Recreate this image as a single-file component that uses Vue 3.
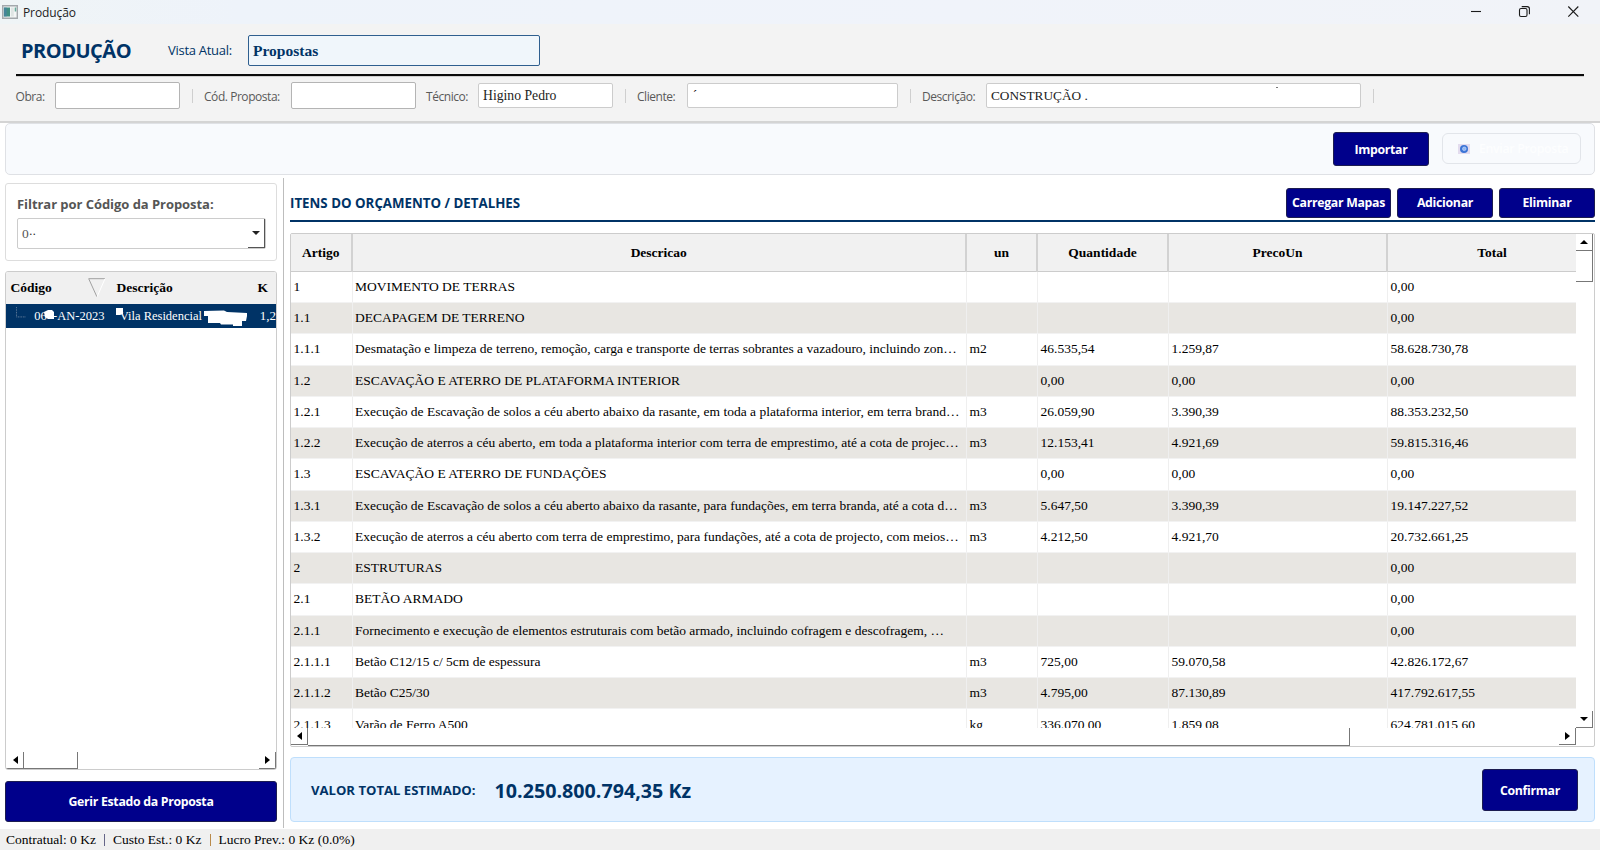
<script setup>
const columns = [
  { key: 'art', label: 'Artigo' },
  { key: 'desc', label: 'Descricao' },
  { key: 'un', label: 'un' },
  { key: 'qt', label: 'Quantidade' },
  { key: 'pu', label: 'PrecoUn' },
  { key: 'tot', label: 'Total' },
]

const rows = [
  { art: '1', desc: 'MOVIMENTO DE TERRAS', tot: '0,00' },
  { art: '1.1', desc: 'DECAPAGEM DE TERRENO', tot: '0,00' },
  { art: '1.1.1', desc: 'Desmatação e limpeza de terreno, remoção, carga e transporte de terras sobrantes a vazadouro, incluindo zon…', un: 'm2', qt: '46.535,54', pu: '1.259,87', tot: '58.628.730,78' },
  { art: '1.2', desc: 'ESCAVAÇÃO E ATERRO DE PLATAFORMA INTERIOR', qt: '0,00', pu: '0,00', tot: '0,00' },
  { art: '1.2.1', desc: 'Execução de Escavação de solos a céu aberto abaixo da rasante, em toda a plataforma interior, em terra brand…', un: 'm3', qt: '26.059,90', pu: '3.390,39', tot: '88.353.232,50' },
  { art: '1.2.2', desc: 'Execução de aterros a céu aberto, em toda a plataforma interior com terra de emprestimo, até a cota de projec…', un: 'm3', qt: '12.153,41', pu: '4.921,69', tot: '59.815.316,46' },
  { art: '1.3', desc: 'ESCAVAÇÃO E ATERRO DE FUNDAÇÕES', qt: '0,00', pu: '0,00', tot: '0,00' },
  { art: '1.3.1', desc: 'Execução de Escavação de solos a céu aberto abaixo da rasante, para fundações, em terra branda, até a cota d…', un: 'm3', qt: '5.647,50', pu: '3.390,39', tot: '19.147.227,52' },
  { art: '1.3.2', desc: 'Execução de aterros a céu aberto com terra de emprestimo, para fundações, até a cota de projecto, com meios…', un: 'm3', qt: '4.212,50', pu: '4.921,70', tot: '20.732.661,25' },
  { art: '2', desc: 'ESTRUTURAS', tot: '0,00' },
  { art: '2.1', desc: 'BETÃO ARMADO', tot: '0,00' },
  { art: '2.1.1', desc: 'Fornecimento e execução de elementos estruturais com betão armado, incluindo cofragem e descofragem, …', tot: '0,00' },
  { art: '2.1.1.1', desc: 'Betão C12/15 c/ 5cm de espessura', un: 'm3', qt: '725,00', pu: '59.070,58', tot: '42.826.172,67' },
  { art: '2.1.1.2', desc: 'Betão C25/30', un: 'm3', qt: '4.795,00', pu: '87.130,89', tot: '417.792.617,55' },
  { art: '2.1.1.3', desc: 'Varão de Ferro A500', un: 'kg', qt: '336.070,00', pu: '1.859,08', tot: '624.781.015,60' },
]
</script>

<template>
  <div class="window">
    <header class="titlebar">
      <svg class="app-icon" width="16" height="14" viewBox="0 0 17 14" preserveAspectRatio="none">
        <rect x=".75" y=".75" width="15.5" height="12.5" fill="#f4f6f6" stroke="#a3a8ac" stroke-width="1.5" />
        <rect x="2" y="2.5" width="6.5" height="9" fill="#3f8f83" />
        <rect x="2" y="2.5" width="3" height="9" fill="#4a7fa8" opacity=".6" />
        <rect x="9.5" y="2.5" width="3" height="9" fill="#dfe5e4" />
        <rect x="13.5" y="2.5" width="1.6" height="4" fill="#69ab9b" />
      </svg>
      <span class="win-title">Produção</span>
      <svg class="win-controls" width="130" height="24" viewBox="0 0 130 24" fill="none" stroke="#1b1b1b" stroke-width="1.1">
        <path d="M11 11.5h10" />
        <rect x="59.5" y="8.5" width="7.5" height="8" rx="1.5" />
        <path d="M61.7 6.6h5.5a2.2 2.2 0 0 1 2.2 2.2v5.500" />
        <path d="M108.3 6.5l10 10.2M118.3 6.5l-10 10.2" />
      </svg>
    </header>

    <section class="head">
      <div class="head-top">
        <h1>PRODUÇÃO</h1>
        <span class="view-label">Vista Atual:</span>
        <div class="view-box">Propostas</div>
      </div>
      <div class="fields">
        <label class="l-obra">Obra:</label><div class="field tall w-obra"></div><i class="sep"></i>
        <label class="l-cod">Cód. Proposta:</label><div class="field tall w-cod"></div>
        <label class="l-tec">Técnico:</label><div class="field w-tec">Higino Pedro</div><i class="sep"></i>
        <label class="l-cli">Cliente:</label><div class="field w-cli"><span class="tick">´</span></div><i class="sep"></i>
        <label class="l-des">Descrição:</label>
        <div class="field w-des"><span>CONSTRUÇÃO .</span><b class="speck"></b></div><i class="sep"></i>
      </div>
    </section>

    <section class="toolbar">
      <button class="btn b-import">Importar</button>
      <div class="b-send">
        <svg width="12" height="10" viewBox="0 0 12 10">
          <rect width="12" height="10" fill="#e3dcee" />
          <circle cx="6" cy="5" r="4" fill="#3b74d6" />
          <circle cx="6.3" cy="4.8" r="1.8" fill="#8fb6f2" stroke="#d6e4fb" stroke-width=".6" />
        </svg>
        <span>Enviar Proposta</span>
      </div>
    </section>

    <main class="body">
      <aside class="left">
        <div class="filter">
          <div class="filter-label">Filtrar por Código da Proposta:</div>
          <div class="combo">
            <span>0<small>··</small></span>
            <div class="combo-btn"><svg width="8" height="4" viewBox="0 0 8 4"><path d="M0 0h8L4 4z" fill="#222" /></svg></div>
          </div>
        </div>
        <div class="tree">
          <div class="tree-head">
            <span class="t-cod">Código</span>
            <svg width="18" height="20" viewBox="0 0 18 20" fill="none"><path d="M17 .7H.7L9 19" stroke="#a0a0a0" /><path d="M17 .7L9 19" stroke="#fff" /></svg>
            <span class="t-des">Descrição</span>
            <span class="t-k">K</span>
          </div>
          <div class="tree-row">
            <svg width="12" height="23" viewBox="0 0 12 23" fill="none" stroke="#8a9bb0" stroke-dasharray="1 1"><path d="M.5 0v11.5M.5 12h11" /></svg>
            <span class="r-cod">06<span class="hid">0</span>-AN-2023</span>
            <span class="r-des">Vila Residencial</span>
            <span class="r-k">1,2</span>
            <svg class="redact" width="269" height="24" viewBox="0 0 269 24" fill="#fff">
              <path d="M37 8l4-2h4l2 2v7h-6l-3-2z" />
              <path d="M109 4h7v6l-3 1h-4z" />
              <path d="M197 7l20-.5 3 1.5 20 1v3l-1 5h-4v5h-9v-1.500h-12l-1-1.500h-12v-7h-4z" />
            </svg>
          </div>
          <div class="tree-space"></div>
          <div class="hbar">
            <div class="sb lft"><svg width="5" height="8" viewBox="0 0 5 8"><path d="M5 0v8L0 4z" /></svg></div>
            <div class="thumb tree-thumb"></div>
            <div class="grow"></div>
            <div class="sb rgt"><svg width="5" height="8" viewBox="0 0 5 8"><path d="M0 0v8l5-4z" /></svg></div>
          </div>
        </div>
        <button class="btn b-manage">Gerir Estado da Proposta</button>
      </aside>

      <section class="right">
        <div class="right-head">
          <h2>ITENS DO ORÇAMENTO / DETALHES</h2>
          <button class="btn b-load">Carregar Mapas</button>
          <button class="btn b-std">Adicionar</button>
          <button class="btn b-std">Eliminar</button>
        </div>
        <div class="table">
          <div class="view">
            <div class="grid">
              <div class="tr th"><span v-for="c in columns" :key="c.key">{{ c.label }}</span></div>
              <div v-for="r in rows" :key="r.art" class="tr td">
                <span v-for="c in columns" :key="c.key">{{ r[c.key] }}</span>
              </div>
            </div>
            <div class="vbar">
              <div class="sb up"><svg width="8" height="4" viewBox="0 0 8 4"><path d="M0 4h8L4 0z" /></svg></div>
              <div class="thumb v-thumb"></div>
              <div class="grow"></div>
              <div class="sb down"><svg width="8" height="4" viewBox="0 0 8 4"><path d="M0 0h8L4 4z" /></svg></div>
            </div>
          </div>
          <div class="hbar table-hbar">
            <div class="sb lft"><svg width="5" height="8" viewBox="0 0 5 8"><path d="M5 0v8L0 4z" /></svg></div>
            <div class="thumb h-thumb"></div>
            <div class="grow"></div>
            <div class="sb rgt"><svg width="5" height="8" viewBox="0 0 5 8"><path d="M0 0v8l5-4z" /></svg></div>
          </div>
        </div>
        <div class="total">
          <span class="total-label">VALOR TOTAL ESTIMADO:</span>
          <span class="total-value">10.250.800.794,35 Kz</span>
          <button class="btn b-confirm">Confirmar</button>
        </div>
      </section>
    </main>

    <footer class="status">
      <span>Contratual: 0 Kz</span><i></i><span>Custo Est.: 0 Kz</span><i class="warm"></i><span>Lucro Prev.: 0 Kz (0.0%)</span>
    </footer>
  </div>
</template>

<style>
body { margin: 0; background: #fff; }
</style>

<style scoped>
* { box-sizing: border-box; }
.window { width: 1600px; height: 850px; overflow: hidden; display: flex; flex-direction: column; background: #fff; color: #000; font-family: "Liberation Serif", "Times New Roman", serif; font-size: 13.5px; white-space: nowrap; }
h1, h2, label, .win-title, .view-label, .filter-label, .btn, .b-send, .total { font-family: "Open Sans", "Noto Sans", sans-serif; }
.grow { flex: 1; }

.titlebar { height: 24px; flex: none; display: flex; align-items: center; padding-left: 2px; background: linear-gradient(90deg, #eff4f6, #eef3fa 15%, #f0f3fa 60%, #f1f3f8); }
.app-icon { margin-right: 5px; }
.win-title { font-size: 12px; letter-spacing: -.1px; color: #222; }
.win-controls { margin-left: auto; margin-right: 10px; }

.head { height: 99px; flex: none; background: #f3f3f3; border-bottom: 2px solid #d4d4d4; padding: 11px 16px 0; }
.head-top { height: 41px; display: flex; align-items: flex-start; border-bottom: 2px solid #0a0a0a; box-shadow: 0 1px #cfcfcf; }
h1 { margin: 1px 0 0 5px; width: 147px; font-size: 20px; letter-spacing: -.5px; line-height: 30px; color: #003366; }
.view-label { width: 80px; font-size: 13px; letter-spacing: -.28px; line-height: 30px; color: #003366; }
.view-box { width: 292px; height: 31px; border: 1px solid #2f5f8f; border-radius: 2px; background: #f0f6fb; color: #003366; font-weight: 700; font-size: 15.5px; line-height: 29px; padding-left: 4px; }
.fields { display: flex; align-items: center; height: 39px; margin-left: -.5px; }
label { font-size: 12px; letter-spacing: -.45px; color: #595959; position: relative; top: .5px; }
.l-obra { width: 39.500px; } .l-cod { width: 87px; } .l-tec { width: 52px; margin-left: 10px; } .l-cli { width: 50px; } .l-des { width: 64px; }
.field { height: 25px; border: 1px solid #ccc; border-radius: 2px; background: #fff; padding-left: 4px; line-height: 24px; color: #222; position: relative; font-size: 13.7px; }
.field.tall { height: 27px; border-color: #b4b4b4; }
.w-obra, .w-cod { width: 125px; } .w-tec { width: 135px; } .w-cli { width: 211px; } .w-des { width: 375px; font-size: 13.3px; }
.tick { font-size: 12px; position: relative; top: -1px; left: 1px; color: #000; }
.speck { position: absolute; left: 289px; top: 3px; width: 2px; height: 1px; background: #777; }
.sep { width: 1px; height: 14px; background: #cfcfcf; margin: 0 11px 0 12px; }

.toolbar { height: 52px; flex: none; margin: 0 5px; border: 1px solid #dfe1e5; border-radius: 5px; background: #f8fafd; display: flex; justify-content: flex-end; padding: 8px 13px 0 0; gap: 13px; }
.btn { border: 1px solid #1c1c50; border-radius: 3px; background: #00008b; color: #fff; font-weight: 700; font-size: 12.3px; letter-spacing: -.3px; padding: 0; }
.b-import { width: 96px; height: 34px; }
.b-send { width: 139px; height: 31px; margin-top: 1px; border: 1px solid #e2e5ea; border-radius: 6px; display: flex; align-items: center; padding-left: 15px; gap: 9px; color: #fdfeff; font-size: 12.3px; letter-spacing: -.3px; font-weight: 600; }

.body { height: 654px; flex: none; display: flex; }
.left { width: 284px; padding: 5px 6px 5px 5px; border-right: 1px solid #bdbdbd; display: flex; flex-direction: column; margin-top: 3px; height: 650px; }
.filter { height: 78px; border: 1px solid #ddd; border-radius: 3px; padding: 10px 11px 0; }
.filter-label { font-weight: 700; font-size: 13px; letter-spacing: -.05px; line-height: 20px; color: #555; }
.combo { margin-top: 4px; width: 249px; height: 31px; border: 1px solid #ccc; border-radius: 2px; display: flex; padding-left: 4px; line-height: 29px; color: #555; }
.combo small { font-size: 12px; color: #222; letter-spacing: -.5px; }
.combo-btn { margin-left: auto; width: 17px; border-right: 1px solid #555; border-bottom: 1px solid #555; display: flex; align-items: center; justify-content: center; }
.tree { margin-top: 10px; height: 499px; border: 1px solid #ccc; border-radius: 3px; display: flex; flex-direction: column; overflow: hidden; }
.tree-head { height: 32px; flex: none; background: #f0f0f0; display: flex; align-items: center; font-weight: 700; padding-left: 4.500px; }
.t-cod { width: 77px; } .t-des { margin-left: 11px; width: 141px; }
.tree-row { height: 24px; flex: none; background: #003366; color: #fff; position: relative; display: flex; align-items: center; padding-left: 10px; overflow: hidden; font-size: 12.5px; }
.r-cod { margin-left: 8.500px; width: 85.500px; flex: none; } .r-des { width: 140px; flex: none; } .r-k { font-size: 13px; }
.hid { visibility: hidden; }
.redact { position: absolute; left: 1px; top: 0; }
.tree-space { flex: 1; }
.hbar { height: 17px; flex: none; display: flex; }
.sb { width: 17px; height: 17px; flex: none; display: flex; align-items: center; justify-content: center; border-right: 1px solid #777; border-bottom: 1px solid #777; }
.thumb { border-right: 1px solid #777; border-bottom: 1px solid #777; }
.tree-thumb { width: 54px; }
.tree .lft { width: 18px; padding-left: 2px; }
.b-manage { margin-top: 11px; height: 41px; flex: none; }

.right { margin-left: 6px; width: 1305px; display: flex; flex-direction: column; padding-top: 12px; }
.right-head { height: 35px; display: flex; align-items: flex-start; border-bottom: 2px solid #003366; gap: 6px; padding-top: .5px; }
h2 { margin: 0 auto 0 0; font-size: 13.3px; line-height: 30px; color: #003366; }
.b-load { width: 105px; height: 30px; letter-spacing: -.3px; } .b-std { width: 96px; height: 30px; }
.table { margin-top: 11px; height: 514px; border: 1px solid #ccc; border-radius: 2px; overflow: hidden; flex: none; }
.view { height: 494px; display: flex; overflow: hidden; }
.grid { width: 1285px; flex: none; }
.tr { display: grid; grid-template-columns: 61.500px 614.500px 71px 131px 219px 188px; }
.th { height: 38px; background: #f1f1f1; border-bottom: 1px solid #ccc; font-weight: 700; }
.th span { text-align: center; line-height: 38px; border-right: 2px solid #d2d2d2; }
.th span:last-child { padding-left: 20px; }
.td { height: 31.24px; border-bottom: 1px solid #f2f2f2; }
.td:nth-child(odd) { background: #e8e6e2; }
.td span { padding-left: 2.500px; line-height: 30px; border-right: 1px solid #efefef; overflow: hidden; }
.td:last-child span { line-height: 32px; }
.tr span:last-child { border-right: 0; }
.vbar { width: 17px; display: flex; flex-direction: column; }
.v-thumb { height: 31px; }
.h-thumb { width: 1042px; }
.table-hbar { width: 1285px; height: 18px; }
.total { margin-top: 10px; height: 65px; flex: none; border: 1px solid #bfdffc; border-radius: 4px; background: #e6f2ff; display: flex; align-items: center; padding: 1px 16px 0 20px; color: #003366; font-weight: 700; }
.total-label { font-size: 13.1px; width: 183.500px; }
.total-value { font-size: 19.7px; }
.b-confirm { margin-left: auto; width: 96px; height: 42px; }

.status { flex: 1; background: #f0f0f0; display: flex; align-items: center; padding-left: 6px; }
.status i { width: 1px; height: 12px; margin: 0 8px; background: #668; }
.status i.warm { background: #b98a4a; }
</style>
